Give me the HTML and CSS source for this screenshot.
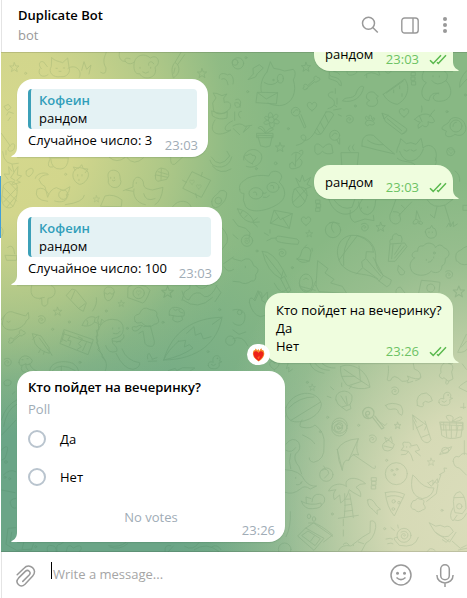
FILE: index.html
```html
<!DOCTYPE html>
<html lang="en">
<head>
<meta charset="utf-8">
<title>Duplicate Bot</title>
<link rel="stylesheet" href="styles.css">
</head>
<body>
<svg class="defs" width="0" height="0" aria-hidden="true">
  <defs>
    <symbol id="checks" viewBox="0 0 18 11"><path d="M1 6.2 L4.2 9.4 L12 1.2 M8 8.2 L9.3 9.4 L17 1.2" fill="none" stroke="#5ab94e" stroke-width="1.5"/></symbol>
    <symbol id="tail-in" viewBox="0 0 8 18"><path d="M6 0 V8 C6 13 4 15.500 0.300 17.300 Q0 18 1 18 H8 V0Z" fill="#fff"/></symbol>
    <symbol id="tail-out" viewBox="0 0 8 18"><path d="M2 0 V8 C2 13 4 15.500 7.700 17.300 Q8 18 7 18 H0 V0Z" fill="#effdde"/></symbol>
    <g id="star"><path d="M0-14 L4-4 L14-4 L6 3 L9 13 L0 7 L-9 13 L-6 3 L-14-4 L-4-4Z"/></g>
    <g id="heart"><path d="M0 13 C-10 6-15 1-14-6 C-12-14-3-14 0-6 C3-14 12-14 14-6 C15 1 10 6 0 13Z"/></g>
    <g id="spiral"><path d="M-1 1 C3 5 7-1 2-4 C-6-8-11 2-6 8 C3 16 15 5 11-5 C7-13-3-14-9-9"/></g>
    <g id="dot"><circle r="3"/></g>
    <g id="bone"><path d="M-14 15 C-22 22-28 11-20 9 C-26 1-14-3-10 5 L10-13 C5-23 17-27 20-19 C29-20 29-9 20-9 C17-3 12-6 11-7 L-10 10 Q-9 15-14 15Z"/></g>
    <g id="duck"><path d="M-20 12 C-22 2-14-2-5 2 C-8-5-6-18 5-18 C15-18 18-8 13-2 L21 0 L12 4 C16 18 6 22-6 21 C-14 21-19 18-20 12Z M-11 9 Q-4 16 2 8"/><circle cx="7" cy="-10" r="1"/></g>
    <g id="fish"><path d="M-24 12 C-18-10 4-20 16-10 L26-16 L22-2 L25 7 L13 2 C0 16-14 16-24 12Z M-10-3 Q-5 4-9 11 M14-8 L12 2"/></g>
    <g id="carrot"><path d="M-36-27 C-22-28 8-8 12 13 C-12 14-30-6-36-27Z M12 13 L29 12 M10 10 L23 0 M11 15 L23 26 M-23-20 L-27-13 M-7-9 L-14-2"/></g>
    <g id="flower"><circle r="9"/><path d="M-7-7 C-15-25 4-29 5-9 C15-27 30-10 10-2 C32-1 24 20 8 8 C13 28-8 28-5 9 C-23 21-30 3-10 1 C-27-4-20-18-7-7Z"/></g>
    <g id="candy"><circle r="13"/><path d="M-4 4 C2 7 6-1 0-4 C-8-5-9 8 0 10 M10 10 L31 37 L36 34 L15 7"/></g>
  </defs>
</svg>
<div class="app">
  <div class="edge"><span class="edge-mark"></span></div>
  <main class="window">
    <header class="header">
      <div class="peer">
        <div class="peer-name">Duplicate Bot</div>
        <div class="peer-status">bot</div>
      </div>
      <div class="tools">
        <svg width="18" height="18" viewBox="0 0 18 18"><g fill="none" stroke="#999" stroke-width="1.500"><circle cx="7.500" cy="7.200" r="6"/><path d="M11.800 11.500 L16.800 16.500"/></g></svg>
        <svg width="18" height="17" viewBox="0 0 18 17"><g fill="none" stroke="#999" stroke-width="1.400"><rect x=".8" y="1" width="16.400" height="15" rx="2.800"/><path d="M12 1 V16"/></g></svg>
        <svg width="6" height="18" viewBox="0 0 6 18"><g fill="#999"><circle cx="3" cy="3" r="2.050"/><circle cx="3" cy="9" r="2.050"/><circle cx="3" cy="15" r="2.050"/></g></svg>
      </div>
    </header>

    <section class="chat">
      <svg class="pattern" width="466" height="500" viewBox="1 52 466 500" aria-hidden="true">
        <g transform="scale(.33333)">
          <use href="#star" x="43" y="202"/><use href="#star" x="606" y="220"/><use href="#dot" x="77" y="220"/>
          <path d="M119 207 C111 225 129 236 144 224 M124 206 C112 194 120 180 131 186 L142 200 M155 173 L154 199 C143 217 159 234 182 230 C202 233 213 215 207 201 L203 174 L188 188 C174 183 167 184 155 173 M204 205 C227 190 248 213 238 232 M245 211 L252 185 L260 208 L273 195 L267 222 M168 205 h4 M190 204 h4 M177 214 l6 0"/>
          <path d="M302 217 Q319 228 318 204 C303 180 319 163 319 156 M358 156 Q353 184 377 185 M390 176 C359 166 380 205 403 186 C409 165 433 158 451 174 C472 160 486 189 465 202 C476 235 430 244 419 221 C404 225 399 205 403 186 M446 196 C443 184 456 181 461 191 M420 202 v3 M452 202 v3 M428 216 q9 8 18 0"/>
          <path d="M543 157 L525 187 L533 194 L554 164 M524 188 C513 201 515 217 520 234 C535 224 542 209 533 194 M525 204 L521 220"/>
          <path d="M658 235 C655 218 672 218 683 225 C694 216 704 237 699 252 M665 237 Q680 230 684 254 M640 280 L648 294 L638 309 L641 332 C650 348 677 343 690 325 C697 307 682 302 673 308 L671 294 L681 282 L666 287 L652 281Z M636 333 Q668 347 682 335 L681 354 Q657 362 638 348Z M645 360 C622 395 650 417 693 390 C670 399 668 376 697 363"/>
          <path d="M13 319 l12-6 8 10-11 8Z M20 345 l6-10 14 5 M31 352 l-7 10 M4 400 L31 438 M29 438 C17 447 27 461 41 449 C50 431 38 425 29 438"/>
        </g>
        <g transform="translate(233 0) scale(.33333)">
          <circle cx="15" cy="190" r="17"/><circle cx="6" cy="187" r="9"/><use href="#dot" x="39" y="173"/><use href="#dot" x="44" y="275"/>
          <path d="M46 238 L61 222 L60 205 L79 194 L91 204 L73 221 L68 230Z"/>
          <path d="M102 216 L112 185 L122 205 Q139 207 155 213 L181 208 Q192 218 181 240 C193 275 178 310 147 316 C126 319 109 311 105 309 M102 216 C86 233 81 258 85 275 M94 248 Q119 263 137 242 M74 277 L134 278 L130 312 L70 308Z M74 278 L100 297 L134 278"/><ellipse cx="142" cy="236" rx="9" ry="13"/><circle cx="121" cy="240" r="2"/>
          <use href="#star" x="219" y="201"/><use href="#bone" x="234" y="252"/><use href="#heart" x="237" y="319"/>
          <path d="M8 299 Q19 293 23 306 L21 322 M5 309 q14-5 17 9-14 11-17-6 M5 336 v25 M25 334 q-10 0-8 12l5 8 M0 378 Q22 365 36 379 L56 376 M1 386 L20 404 M41 380 L31 397 L50 380"/>
          <use href="#flower" x="115" y="360"/>
          <path d="M75 406 L118 407 L111 438 Q99 445 84 438Z M72 400 h48 v13 h-48Z M98 400 C93 377 80 376 75 384 C86 384 88 393 98 400 C105 383 121 381 121 388 L103 399"/>
          <circle cx="188" cy="335" r="13"/><path d="M181 338 Q189 324 195 331 M198 348 L214 384 L219 381 L204 344"/>
          <path d="M279 336 L245 396 Q253 409 266 400 L302 345 Q297 332 279 336Z M275 344 L286 368 M262 366 L273 387 M251 385 L262 402 M245 397 C221 437 200 418 205 407 C221 397 230 428 190 436 M285 326 C315 318 305 297 290 292 C282 284 287 275 300 276 M302 330 L324 326 M304 315 l7 5 M316 344 l9 4 M307 266 v14 M312 295 v17"/>
          <path d="M289 217 Q286 229 302 231 C322 235 326 247 325 257 L318 254 C316 243 304 242 289 236Z M329 302 C336 287 357 300 368 283 C374 264 385 254 392 261 C387 292 360 310 330 303Z"/>
          <path d="M401 295 C394 276 423 268 429 284 L436 289 L430 294 C440 307 430 321 415 319 C399 320 397 305 409 302Z"/>
          <path d="M451 283 L515 237 C532 258 526 296 493 313 C474 310 459 299 451 283Z M460 279 L511 243 M482 270 v8 M500 258 v8 M507 281 v8"/>
          <path d="M302 214 Q315 216 320 223 M342 216 C341 237 381 218 371 215 M395 226 Q413 210 438 226 M401 222 v11 M437 214 l3 10 M458 216 Q466 226 475 213"/>
          <path d="M536 217 h11 v10 h-12Z M535 231 h11 v10 h-11Z M536 245 h12 v10 h-11Z M572 214 Q559 240 580 248 C560 267 562 300 588 302 C591 280 606 277 617 281 M597 242 Q610 262 639 242 C650 222 637 215 633 213 M639 242 C661 265 661 304 617 304 C595 303 596 283 617 279 M600 227 v3 M619 228 v3 M701 212 Q678 235 680 262 Q691 247 702 237"/>
          <use href="#dot" x="367" y="318"/><use href="#spiral" x="349" y="358"/>
          <path d="M401 361 C391 349 403 343 406 355 M409 356 C403 341 419 342 416 356 M418 360 C420 347 430 354 421 363 M403 377 C390 373 400 357 411 361 C431 365 426 379 411 374Z"/>
          <path d="M448 340 L465 346 L521 386 Q523 399 506 402 L458 365Z M448 340 L453 357 L465 346 M463 356 L506 392 M509 402 L520 391"/>
          <use href="#heart" x="513" y="338"/><use href="#dot" x="642" y="335"/><use href="#dot" x="697" y="285"/><path d="M545 358 C564 338 591 335 603 360 C609 368 595 371 585 365 C589 380 577 384 569 376 L556 385Q551 374 562 367Q554 366 545 358Z M566 336 q3-9 0-18 M590 350 Q596 336 605 330 M559 347 l8 18"/>
          <path d="M627 386 C626 373 646 376 651 360 C661 345 692 355 696 374 C706 393 687 415 666 403 C648 417 630 408 640 395Z"/><circle cx="669" cy="378" r="18"/><path d="M660 379 q0-12 10-12"/>
          <circle cx="305" cy="406" r="15"/><path d="M297 408 q7-14 15-6 M311 419 L318 432 M320 416 v16"/><use href="#star" x="141" y="442"/><use href="#dot" x="166" y="386"/>
          <path d="M246 436 Q254 424 270 443 Q286 426 296 435 L300 459 Q281 466 268 454 Q253 472 246 456Z"/>
          <path d="M387 438 C385 414 397 400 421 406 L457 439 L485 462 Q431 450 387 438Z M404 421 Q425 437 450 434"/>
          <path d="M325 458 h52 l-8 73 h-39Z M351 454 q-10-10 0-17 M363 451 q-10-10 0-17 M199 454 q13-10 10 7 L190 484 M32 480 C27 454 64 435 84 461 C94 483 70 510 40 499"/>
          <path d="M491 457 C491 440 502 434 503 416 L520 431 Q533 424 549 433 L564 415 Q569 431 570 444 C592 423 620 449 607 482 M500 454 C514 497 557 490 571 447 M493 475 C510 491 541 478 552 503 C587 518 621 497 607 474 M513 450 q8 8 16 0 M534 450 q8 8 16 0"/>
          <circle cx="653" cy="455" r="12"/><use href="#heart" x="654" y="454" transform="translate(327 227) scale(.5)"/>
          <path d="M42 466c-12-4-14 13 17 26M42 466q14-9 15 0q14-1 10 10L57 491"/>
        </g>
        <g transform="translate(0 150) scale(.33333)">
          <path d="M79 63 Q93 50 99 58 Q103 69 87 80Q75 78 79 63Z M148 24 h56 M152 26 Q154 59 183 57 Q204 55 205 24 M149 29 Q137 56 158 51"/>
          <path d="M226 59 Q236 45 260 61 C276 76 254 104 238 103 C218 95 212 69 226 59Z M225 60 L220 51 L236 55 L245 44 L250 56 L264 57 L256 68 M233 74 v4 M246 74 v4 M237 88 v4"/>
          <circle cx="197" cy="73" r="3"/><path d="M325 85 C320 67 330 59 345 61 C364 67 357 79 363 95 C361 118 331 119 325 98Z M332 82 v3 M343 82 v3 M337 91 q4 4 8 0"/>
          <path d="M36 43 L42 68 L32 83 L45 91 L35 103 M35 63 L26 50 L28 73 L12 72 L24 88 M42 66 L54 50 L52 75 L65 78 L50 91 L61 97 L38 104 M11 105 Q34 84 51 105 C54 124 48 164 35 172 C15 180 1 159 6 137Z M10 112 L50 153 M28 98 L51 122 M7 137 L39 169 M52 112 L11 156 M50 136 L21 171"/>
          <path d="M106 85 C110 65 144 67 145 74 Q124 74 117 89 Q122 104 135 110 L143 142 Q150 118 169 113 L190 122 L210 110 Q208 127 199 134 C208 153 182 160 164 153 M146 132 Q131 107 111 118 Q100 150 143 154 M253 136 Q251 157 196 164"/>
          <circle cx="190" cy="134" r="14"/><use href="#star" x="289" y="147" transform="translate(87 44) scale(.7)"/>
          <path d="M370 122 L399 111 C397 75 422 75 430 96 C430 117 441 116 457 120 L489 112 Q485 153 465 164 M402 117 C397 138 410 159 436 164 M431 131 Q437 157 465 146 M378 120 L400 124 M409 98 v2"/>
          <path d="M466 77 Q467 58 483 54 Q500 56 505 65 Q510 78 500 88 L473 94Q464 90 466 77Z M469 75 L503 82 M474 65 L502 73 M484 56 L483 90"/>
          <path d="M549 114 L576 65 L632 91 L605 141Z M559 97 L548 91 M604 78 L607 67 M587 131 L590 143"/><use href="#heart" x="576" y="96" transform="translate(288 48) scale(.5)"/><use href="#heart" x="597" y="110" transform="translate(298 55) scale(.5)"/>
          <path d="M634 21 Q659 60 689 18 L681 4 M630 31 Q635 53 665 51 Q690 45 695 21 M637 48 Q661 77 693 57 M328 22 Q350 42 375 23 M381 23 Q402 50 430 24 M512 22 Q510 47 524 43 L548 21 M8 5 Q12 52 55 40 M18 14 L18 2 M302 168 L315 138 Q342 130 366 150 L364 169Z"/>
          <path d="M635 155 C638 136 652 137 659 123 Q674 118 680 129 Q681 153 656 170 Q636 181 635 155Z"/><circle cx="655" cy="152" r="10"/><path d="M518 170 Q531 152 551 154 Q568 156 573 170"/>
          <path d="M23 292 Q40 278 44 311 M16 316 L51 317 L49 331 H21Z M666 233 Q688 256 681 278 L666 299 M671 341 L700 321 M672 350 Q684 372 701 358 M2 230 Q15 240 6 258"/>
        </g>
        <g transform="translate(233 150) scale(.33333)">
          <path d="M20 119 C15 97 35 93 42 85 Q72 72 108 78 C111 56 147 61 146 82 Q143 92 138 96 C157 113 162 139 143 156 C111 182 55 193 38 170 Q27 152 33 130 Q21 132 20 119Z"/><ellipse cx="69" cy="130" rx="21" ry="17"/><ellipse cx="120" cy="112" rx="18" ry="15"/><path d="M91 129 q5 4 9-1 M91 142 q10 4 18-5 M62 127 q10-5 9 8 M113 107 q10-5 9 8"/>
          <circle cx="128" cy="40" r="4"/><circle cx="70" cy="56" r="3"/><path d="M171 42 C165 61 181 59 201 50 Q214 34 201 27 M187 49 L189 11 M176 14 Q188 0 202 12 M169 43 l9-7 7 10"/>
          <path d="M184 118 Q201 104 218 117 C230 138 212 170 194 172 C175 169 174 143 184 118Z M187 116 L216 154 M218 119 L180 157 M204 112 L224 137 M199 109 L188 84 L201 96 L208 75 L214 94 L233 82 L222 103 L235 110 L217 117"/>
          <use href="#carrot" x="50" y="204"/><path d="M124 181 L178 191 L169 235 L113 220Z M124 181 L142 209 L178 191 M113 220 L137 202 M149 204 L169 235"/><use href="#heart" x="219" y="213"/><use href="#star" x="229" y="251" transform="translate(57 63) scale(.75)"/>
          <path d="M249 150 h12v10h-12Z M251 162h12v10h-12Z M249 174h12v10h-12Z"/>
          <circle cx="300" cy="240" r="23"/><path d="M300 218 Q289 231 302 247 M290 218 L302 216 L319 221"/><use href="#spiral" x="394" y="232"/><use href="#star" x="443" y="231"/>
          <path d="M288 149 C300 190 343 209 372 175 L388 148 M304 151 Q327 183 357 172 L365 149 M352 181 Q347 208 365 217 L396 207 L423 212 L421 196 M377 156 Q379 193 404 194 Q427 187 428 151 M385 173 v3 M404 170 v3"/>
          <path d="M488 150 L475 186 C465 200 471 221 488 222 C504 220 506 204 498 196 L536 156 M481 185 Q502 184 501 196 M505 166 l9 8"/><path d="M541 215 Q548 202 556 212 Q554 224 542 222Z M558 220 Q558 205 569 219 Q567 227 558 220Z M548 208 L551 182 L561 207"/>
          <path d="M583 150 Q599 178 637 165 L661 147 M612 170 L604 204 L592 194 M635 166 L654 227 M641 231 l7-12 4 12 9-16 0 15 12-8"/>
          <path d="M577 246 Q578 233 591 235 L596 226 Q599 237 606 236 Q616 256 603 263 Q582 271 577 246Z M588 246 v2 M598 246 v2"/>
          <path d="M0 208 L15 228 L38 235 L51 249 L48 265 M0 254 L15 267"/><circle cx="42" cy="272" r="17"/><use href="#spiral" x="42" y="273" transform="translate(12 82) scale(.7)"/>
          <path d="M129 267 Q128 256 142 259 L192 267 Q202 272 195 283 Q154 281 135 275Z M130 264 L114 265 M94 249 l12 7 M111 249 v-10 M113 267 l-11 5"/><use href="#spiral" x="147" y="309"/>
          <path d="M192 327 C210 318 200 302 214 293 Q232 289 234 308 L229 333Q205 344 192 327Z M193 327 Q213 329 229 333 M214 292 l7-7 M237 295 l1 8"/>
          <path d="M326 345 C300 307 315 262 354 256 C399 254 426 280 428 316 C427 342 431 359 452 377 L475 390 Q472 408 461 410 L438 393 C410 362 363 386 326 345Z M318 330 Q347 290 374 256 M354 256 Q327 292 332 346 M372 256 Q424 275 421 306 M421 306 L400 305 L398 326 L386 335 L389 353 L370 372 M401 328 L443 378 M392 355 L435 387 M421 323 L450 376 M451 377 L438 393"/>
          <path d="M466 333 L471 282 L515 279 L522 290 L487 333Z M471 280 Q468 266 478 268 Q476 252 491 251 Q492 258 504 257 Q510 268 506 276 M480 284 L476 326 M514 288 L485 324 M504 284 L485 313"/>
          <path d="M544 324 C529 319 541 300 554 304 Q553 285 571 288 C584 270 608 284 607 293 Q621 277 633 293 C653 301 652 320 637 325 Q638 344 627 347 C627 371 602 371 595 363 C579 382 545 378 536 363 C527 344 532 334 544 324Z M580 328 v3 M602 321 v3 M586 337 q10 0 12-8"/>
          <path d="M88 304 Q119 302 151 361 L144 386 Q102 366 88 304Z M97 315 L145 376 M144 386 L154 379 L174 421 L165 427Z M151 361 L160 380 M0 326 Q14 331 25 333 Q53 314 62 347 Q85 357 68 374 Q71 395 55 393 Q36 407 21 396 L0 394 M37 349 v4"/>
          <ellipse cx="219" cy="399" rx="20" ry="27"/><path d="M212 389 q7-10 14 0 M249 407 L254 332 L285 356 L276 369 L303 388 L293 399 L328 409 L341 430 L258 425 L249 407Z"/>
          <path d="M494 360 L496 346 L515 364 Q515 378 502 374Z M670 333 Q662 306 684 300 Q690 293 702 289 M673 333 Q682 348 704 343 M557 429 L565 391 Q600 393 621 397 L618 425"/><circle cx="593" cy="414" r="12"/><use href="#spiral" x="647" y="374"/><use href="#star" x="678" y="425" transform="translate(-136 -85) scale(1.2)"/><use href="#dot" x="604" y="309"/><use href="#dot" x="72" y="303"/><use href="#dot" x="178" y="353"/>
          <path d="M64 448 L75 422 L86 445 L103 426 L104 450 M489 430 Q486 413 502 411 L516 429 M691 166 h14 v15h-14Z M641 60 q-6 18 4 30 M666 63 q16 10 14 31"/>
        </g>
        <g transform="translate(233 280) scale(.33333)">
          <path d="M49 67 Q49 42 66 63 L78 36 Q90 31 86 61 L97 68 M49 67 Q58 104 82 110 L97 106 M124 10 Q146 55 167 21 M199 12 Q203 36 235 33 L248 4 M205 20 L247 31 M0 90 C20 84 36 92 36 109 C36 138 15 143 0 128 M0 176 Q30 164 44 197 M0 150 l18 13 20-7"/>
          <circle cx="20" cy="97" r="7"/><use href="#star" x="238" y="322" transform="translate(71 97) scale(.7)"/><use href="#heart" x="124" y="256"/><use href="#dot" x="284" y="412"/><use href="#dot" x="223" y="307"/>
          <path d="M165 251 l-5 15 8-4-1 14 11-8 M231 250 q7 24 42 30 M247 251 q12 19 42 20 M268 251 q16 14 38 13"/>
          <path d="M323 260 C347 246 404 263 411 322 Q378 333 341 315 Q319 288 323 260Z M333 268 L410 320 M378 258 L382 300 M327 289 L366 289 M350 316 L386 304"/>
          <path d="M466 258 C470 292 453 306 473 301 Q481 277 507 304 Q537 305 523 288 Q551 301 562 294 Q567 275 544 267 L541 251"/><path d="M548 302 q13-3 17-10 M524 304 q-8 9 15 0"/>
          <path d="M634 249 Q620 257 624 278 Q612 289 628 296 L633 293 L646 304 L660 297 L656 276 Q667 253 647 250 M640 300 L638 310 Q645 318 648 302"/>
          <path d="M159 382 C180 331 251 325 265 371 C265 412 199 435 174 422 Q155 410 159 382Z M174 421 L263 366 M167 384 q32-34 76-33 M157 408 l-15 33"/>
          <path d="M309 360 C302 334 344 322 357 348 Q359 362 351 374 L354 386 L340 392 L327 382 Q312 375 309 360Z M327 381 L350 374 M324 348 L340 373 M339 349 L343 373 M294 353 l-11-4 M302 329 l-9-8 M326 320 v-11 M349 326 l6-8"/>
          <use href="#spiral" x="485" y="333"/><use href="#candy" transform="translate(406 399) scale(1.3)"/><path d="M458 376 Q475 364 503 376 Q514 394 506 406 L496 399 Q496 385 480 387 Q464 393 458 376Z M553 376 Q546 340 580 339 Q597 348 598 362 L587 367 Q576 360 570 369 Q576 388 553 376Z"/><use href="#duck" x="638" y="355"/>
          <circle cx="320" cy="437" r="23"/><circle cx="320" cy="437" r="9"/><path d="M541 449 L539 405 L581 436 L575 450 M539 405 L550 426"/><use href="#star" x="494" y="437" transform="translate(148 131) scale(.7)"/>
          <path d="M621 426 L690 427 V450 H626Z M632 427 V450 M650 427 V450 M670 427 V450 M651 425 Q629 405 649 406 Q667 408 657 425 Q687 402 687 416 Q684 424 657 425 M702 303 Q676 319 678 323 L702 335 M700 163 L674 217 Q697 219 704 205 M684 202 L700 184 M688 252 L700 268 M692 370 v16 M683 382 h15"/>
        </g>
        <g transform="translate(0 280) scale(.33333)">
          <path d="M7 132 C9 100 27 89 43 98 L77 108 L85 97 L87 115 L79 122 C70 151 13 163 7 132Z M14 106 L3 120 M21 125 q5 5 10-1 M95 17 C86 52 108 58 125 54 L126 74 Q135 84 143 71 L144 55 C174 52 168 18 154 17 M119 57 q8-6 14-5"/>
          <use href="#dot" x="158" y="148"/><use href="#dot" x="319" y="93"/><use href="#dot" x="208" y="126"/><use href="#dot" x="489" y="127"/><use href="#dot" x="240" y="247"/><use href="#dot" x="382" y="145"/><use href="#dot" x="659" y="89"/><use href="#dot" x="624" y="215"/>
          <use href="#star" x="173" y="95" transform="translate(17 9) scale(.9)"/><use href="#star" x="503" y="36" transform="translate(-126 -9) scale(1.25)"/><use href="#star" x="364" y="71" transform="translate(109 21) scale(.7)"/><use href="#spiral" x="124" y="119"/><use href="#spiral" x="22" y="247"/><use href="#fish" x="271" y="124"/><use href="#bone" x="49" y="173"/>
          <path d="M200 45 L216 27 L228 31 L259 69 L250 94 L237 87 L202 50Z M224 33 L214 57 M255 71 L238 84 M278 93 Q293 72 289 53 M313 42 Q309 25 323 21 Q341 20 343 35 Q336 64 323 62 Q313 58 313 42Z M314 38 l8 5 8-5 6 5 7-6"/>
          <path d="M385 21 L403 11 L438 19 L450 31 Q438 67 428 69 L384 53Z"/><circle cx="416" cy="39" r="17"/><use href="#heart" x="416" y="38" transform="translate(208 19) scale(.5)"/>
          <path d="M546 61 L553 36 L569 25 L571 10 M549 60 Q594 94 637 53 M546 33 Q551 58 567 60 Q577 35 600 39 L614 50 Q633 54 651 16 M587 16 Q606 37 627 13 M648 17 L663 38 L645 65"/>
          <path d="M98 161 L123 168 L147 203 L148 220 Q121 214 106 192Z M118 174 L146 213 M122 207 L116 218 M133 214 L130 223 M149 214 L156 226 M98 178 L111 165"/>
          <path d="M193 149 L280 179 L264 224 L181 191Z M189 161 L276 190 M193 156 L185 185 M211 168 l-8 13 10 2-4 13 M235 170 l13 7-13 14 9 9-12 8 M185 177 l14 7 M248 212 l11-24"/>
          <path d="M316 272 C329 234 301 242 290 177 C291 136 312 118 337 118 Q371 118 370 149 Q369 172 336 176 L338 190 Q355 204 350 214 Q325 223 317 197 M349 187 Q378 179 371 164 M366 207 Q380 243 419 248 Q421 263 399 268 Q371 268 348 220 M310 122 L305 117 L302 133 L295 133 L297 149 L289 151 L294 167 L288 169 L294 184 L289 187 L297 203 L293 209 L307 223 L306 231 L315 241 M338 144 v3 M357 143 v3 M340 160 q14 5 20-6 M337 183 q14 2 25 2"/>
          <path d="M406 125 Q396 105 418 102 Q429 75 450 89 Q476 90 470 107 Q485 131 463 133 Q445 150 424 127Q409 132 406 125Z M424 140 Q410 159 399 151 Q391 136 409 141 Q423 131 431 140 L451 137 L463 184 Q464 201 451 199 Q440 200 435 190 L429 153 L417 160"/>
          <path d="M508 105 C504 82 522 79 537 84 Q558 88 552 108 Q535 112 508 105Z M520 108 L518 119 Q532 133 548 119 L545 109 M520 87 q5 9 12 2 M537 88 q-3 9 12 11"/>
          <path d="M491 240 C516 152 584 113 666 112 C653 185 596 239 491 240Z M535 184 Q503 212 491 240 Q545 229 579 204 L568 194 L553 201 L557 181 L535 184Z M560 160 L582 140 L586 166 L603 159 L610 177 L633 170 M637 133 L666 112"/>
          <path d="M57 247 C58 223 87 221 97 242 Q92 259 76 252 Q57 263 57 247Z M66 257 Q57 279 83 277 M77 252 Q77 277 104 278 M88 251 Q96 274 126 277 M66 239 h3 M81 236 h3 M149 273 C150 245 190 239 219 250 Q234 260 236 273 M157 272 Q180 244 226 272 M184 259 L184 274"/>
          <path d="M443 237 Q440 221 448 220 L457 237 M456 238 L471 233 M445 244 L470 243 M505 272 L526 265 L530 272 L548 263 L585 264 L570 273"/><use href="#duck" x="645" y="245"/><circle cx="691" cy="182" r="14"/><path d="M12 306 Q21 293 34 305 Q32 322 15 316Z M4 420 Q19 373 50 360 M11 439 Q19 389 50 373 M37 342 l8-7"/>
        </g>
        <g transform="translate(0 420) scale(.33333)">
          <path d="M5 45 Q30 20 47 1 M4 90 Q35 60 15 115 L5 120 M10 165 Q30 145 47 155 M5 210 L45 218 M47 235 Q28 238 31 250 Q36 268 47 264 M47 323 L24 325 L18 373 L50 391 L96 387 M35 337 L30 369 M71 368 L66 388 L94 390 L100 372"/><circle cx="15" cy="172" r="3"/><circle cx="29" cy="176" r="3"/><circle cx="18" cy="126" r="4"/><use href="#dot" x="107" y="380"/>
          <path d="M142 394 Q138 371 157 377 Q169 378 169 395 M171 394 Q166 372 181 373 L190 367 M199 394 Q203 365 220 384 Q245 369 244 387 L239 394 M326 377 Q359 384 378 367 M330 381 Q359 392 383 371 M495 394 Q493 372 512 377 M505 395 L520 378 M554 379 Q578 395 597 368 M583 389 Q619 364 656 394 M636 380 Q652 371 663 389"/>
        </g>
        <g transform="translate(233 420) scale(.33333)">
          <path d="M207 0 Q193 22 209 22 Q234 27 246 15 Q278 37 273 78 Q276 120 242 127 Q227 123 229 114 M209 45 Q238 58 245 71 M159 72 Q179 47 197 67 Q207 89 188 101 Q180 119 198 140 L206 162 M159 91 Q176 101 188 83 M173 101 Q165 125 173 146 M157 149 Q202 151 215 181 Q230 201 251 198 L232 207 Q214 194 202 207 Q179 226 157 217 M188 172 v3 M204 187 v3 M190 194 q12 3 17-9"/>
          <circle cx="319" cy="25" r="23"/><circle cx="316" cy="24" r="12"/><circle cx="317" cy="24" r="4"/><use href="#dot" x="377" y="16"/><use href="#dot" x="262" y="35"/><use href="#star" x="494" y="16" transform="translate(148 5) scale(.7)"/><use href="#spiral" x="418" y="57"/><use href="#star" x="594" y="126" transform="translate(119 25) scale(.8)"/>
          <path d="M313 89 Q328 59 376 56 Q366 84 377 105 Q358 97 347 121 Q330 116 328 151 Q315 124 313 89Z M376 56 L347 121 M313 89 L328 151 M360 103 L418 143 Q430 150 427 138 M432 0 L456 17 L461 11"/>
          <path d="M542 2 L567 60 Q584 77 594 59 L576 3 M550 24 L569 14 M565 52 L588 43 M624 8 L689 10 L684 51 Q646 62 627 47Z M623 14 L689 17 M638 16 L641 50 M655 16 V53 M675 17 L669 51"/>
          <path d="M453 69 Q467 54 474 67 L484 73 Q477 99 454 91Q443 77 453 69Z M461 66 L455 52 L468 59 L474 50 L478 66 M453 78 L479 84 M505 90 L512 80 Q504 63 520 67 Q534 65 534 78 L552 74 L560 90 L546 94 L562 107 M505 90 L526 94 L519 103 L505 104 M526 94 Q535 101 540 122 M521 80 v2 M531 80 v2"/>
          <ellipse cx="637" cy="91" rx="11" ry="9"/><path d="M621 103 Q618 93 656 80 Q652 99 621 103Z"/><circle cx="490" cy="161" r="33"/><circle cx="477" cy="151" r="3"/><circle cx="492" cy="148" r="3"/><circle cx="484" cy="164" r="3"/>
          <circle cx="280" cy="164" r="20"/><path d="M266 151 Q286 141 287 161 L275 174 M277 146 L272 138 M416 173 h14v10h-14Z M417 184h12v11h-12Z M416 197h12v10h-12Z"/>
          <path d="M287 212 C297 189 327 188 341 200 C330 174 367 164 398 191 L381 193 L369 202 Q386 213 383 230 L360 217 L349 209 Q342 236 323 249 L320 225 L304 239 Q297 221 308 210Z M335 221 Q338 260 334 292 M350 221 Q358 260 361 293 M334 238 L352 237 M335 256 L356 253 M334 274 L359 271 M316 295 L376 286"/>
          <path d="M539 166 C529 208 541 230 568 236 Q598 231 603 204 Q572 206 550 175Z M584 188 l11 11 11-14 9 8-5 28-29 23 M535 251 Q539 238 548 241 Q551 232 562 238 Q578 238 571 252 Q584 268 568 270 Q555 281 546 269 Q529 267 535 251 M587 188 l13-8 0 13 13-17 2 13 9-25-5 0 16-9-2-11 8 1"/>
          <path d="M457 218 Q488 210 515 223 L484 288Q461 261 457 218Z M463 230 Q487 222 510 234"/><circle cx="482" cy="244" r="5"/><circle cx="498" cy="248" r="4"/><circle cx="481" cy="267" r="4"/>
          <path d="M404 240 Q416 230 431 258 L443 268 L432 271 L433 283 L420 269 Q402 258 404 240Z M205 244 Q231 259 264 249 Q271 265 238 266 Q214 269 205 244Z M237 245 Q239 220 260 223 Q279 226 274 246 L263 259 M220 249 L219 231 L234 236"/>
          <path d="M196 346 L218 324 L273 355 L243 391 L196 350Z M217 325 L241 309 Q262 313 299 345 L272 366 M246 312 L299 349 M207 346 l18-13 37 23-15 20Z M244 348 l-11 15 M227 309 L246 309"/><ellipse cx="228" cy="289" rx="5" ry="7"/><ellipse cx="243" cy="297" rx="5" ry="7"/><use href="#dot" x="298" y="282"/>
          <path d="M317 391 Q325 372 354 378 L389 351 L411 338 L412 303 Q430 299 428 323 Q423 357 399 369 L386 393 M331 373 q10-11 18 4 M361 374 v3 M376 366 L392 371 M331 297 V317 M331 330 V348"/>
          <circle cx="513" cy="346" r="21"/><use href="#spiral" x="513" y="346"/><path d="M494 352 Q478 351 486 361 L499 376 Q546 386 556 352 M459 357 q15-5 20 0 M464 371 q12-4 16 0 M484 331 l-10-8 M496 324 l-2-9"/>
          <path d="M589 309 L605 335 Q622 354 646 349 L661 335 Q650 312 635 321 Q622 312 609 318Z M608 337 L650 366 L669 337 M628 359 L640 367 L648 358 M658 364 L682 385 L700 376 M676 390 L701 385"/>
          <path d="M663 265 Q655 217 681 215 Q699 227 699 266 L688 281 L667 278Z M660 264 Q645 290 660 303 L672 286 M700 281 Q687 309 665 300 M663 233 L692 232 M660 124 Q663 104 678 111 Q690 93 703 103 M661 124 Q663 143 679 144 L700 165 M694 104 V62"/><circle cx="679" cy="259" r="8"/><circle cx="155" cy="388" r="19"/><path d="M159 350 Q174 323 172 275 M584 393 Q591 379 606 391"/><use href="#dot" x="455" y="326"/><use href="#dot" x="627" y="271"/><use href="#dot" x="461" y="121"/>
        </g>
      </svg>

      <div class="messages">
        <article class="bubble out">
          <p>рандом</p>
          <span class="meta">23:03 <svg width="18" height="11"><use href="#checks"/></svg></span>
          <svg class="tail"><use href="#tail-out"/></svg>
        </article>
        <article class="bubble in reply-a">
          <div class="quote"><b>Кофеин</b><span>рандом</span></div>
          <p>Случайное число: 3</p>
          <span class="meta">23:03</span>
          <svg class="tail"><use href="#tail-in"/></svg>
        </article>
        <article class="bubble out">
          <p>рандом</p>
          <span class="meta">23:03 <svg width="18" height="11"><use href="#checks"/></svg></span>
          <svg class="tail"><use href="#tail-out"/></svg>
        </article>
        <article class="bubble in reply-b">
          <div class="quote"><b>Кофеин</b><span>рандом</span></div>
          <p>Случайное число: 100</p>
          <span class="meta">23:03</span>
          <svg class="tail"><use href="#tail-in"/></svg>
        </article>
        <article class="bubble out question">
          <p>Кто пойдет на вечеринку?<br>Да<br>Нет</p>
          <span class="meta">23:26 <svg width="18" height="11"><use href="#checks"/></svg></span>
          <svg class="tail"><use href="#tail-out"/></svg>
          <span class="reaction"><svg width="13" height="14" viewBox="0 0 13 14"><path d="M1 5 Q1 2 3 2 L3.500 .5 Q5 1.500 5 2.500 L6.500 1 L7.500 3 Q8 1 9.500 .3 L10 2 Q12 1.500 12.200 5 Q13 9 6.600 13.500 Q0 9 1 5Z" fill="#f58a2d"/><path d="M1.500 5.500 C1.500 2.500 5.500 2.500 6.500 5 C8 2.300 11.700 3 11.500 6 C11.200 9 8.500 11 6.600 13 C4 11 1.500 9 1.500 5.500Z" fill="#ed2119"/><path d="M5 9 Q6.500 10 7 7.500 Q8.500 9 6.600 11.500Z" fill="#ff5a20"/></svg></span>
        </article>
        <article class="bubble in poll">
          <h2>Кто пойдет на вечеринку?</h2>
          <div class="kind">Poll</div>
          <div class="option"><i></i>Да</div>
          <div class="option"><i></i>Нет</div>
          <div class="votes">No votes</div>
          <span class="meta">23:26</span>
          <svg class="tail"><use href="#tail-in"/></svg>
        </article>
      </div>
    </section>

    <footer class="composer">
      <svg class="clip" width="20" height="22" viewBox="0 0 20 22"><path d="M1.200 9.800 L8 3.200 C13.500 -2.600 22.300 4.800 16.700 11 L9 19.200 C4.200 23.800 -1.800 17.600 2.700 12.900 L9.300 6.400 C12 3.900 15.700 7.200 13.200 10.100 L6.800 16.400" fill="none" stroke="#999" stroke-width="1.500" stroke-linecap="round"/></svg>
      <div class="field"><span class="caret"></span>Write a message...</div>
      <svg class="smile" width="22" height="22" viewBox="0 0 22 22"><g fill="none" stroke="#999" stroke-width="1.500"><circle cx="11" cy="11" r="10"/><path d="M6.500 13.500 Q11 17.800 15.500 13.500"/></g><circle cx="7.500" cy="9.300" r="1.500" fill="#999"/><circle cx="14.500" cy="9.300" r="1.500" fill="#999"/></svg>
      <svg class="mic" width="18" height="23" viewBox="0 0 18 23"><g fill="none" stroke="#999" stroke-width="1.500"><rect x="4.700" y=".8" width="8.600" height="15" rx="4.300"/><path d="M.9 11 C.9 21.500 17.100 21.500 17.100 11 M9 19 V23"/></g></svg>
    </footer>
  </main>
</div>
</body>
</html>
```
FILE: styles.css
```css
* { box-sizing: border-box; }
body {
  margin: 0;
  background: #fff;
  color: #000;
  font: 13px/18px "Open Sans", "Noto Sans", sans-serif;
}
p, h2 { margin: 0; }
svg { display: block; }
.defs { position: absolute; }
.app { display: flex; width: 467px; height: 598px; overflow: hidden; }
.edge { width: 1px; background: #fff; padding-top: 176px; }
.edge-mark { display: block; height: 62px; background: #419fd9; }
.window { display: flex; flex: 1; flex-direction: column; min-width: 0; }

.header {
  display: flex;
  justify-content: space-between;
  height: 52px;
  padding: 6px 19px 0 16px;
  border-left: 1px solid #e4e4e4;
  background: #fff;
}
.peer-name { font-weight: 600; line-height: 19px; }
.peer-status { color: #999; line-height: 20px; }
.tools { display: flex; align-items: center; height: 38px; gap: 22px; }
.tools svg:last-child { margin-left: 1px; }

.chat {
  position: relative;
  height: 500px;
  overflow: hidden;
  background:
    radial-gradient(ellipse 270px 330px at 476px 460px, #dbddbb 0%, #d6dab6 30%, rgba(205, 213, 176, .72) 52%, rgba(190, 205, 168, .3) 76%, rgba(180, 200, 160, 0) 100%),
    radial-gradient(ellipse 270px 300px at 0 80px, #d5d88d 0%, #d2d68c 28%, rgba(200, 210, 138, .62) 60%, rgba(175, 200, 134, .2) 84%, rgba(160, 195, 132, 0) 100%),
    radial-gradient(ellipse 390px 310px at 60px 470px, #6ba587 0%, #6ba587 30%, rgba(107, 165, 135, .5) 60%, rgba(107, 165, 135, 0) 100%),
    #88b884;
  box-shadow: inset 0 1px rgba(0, 0, 0, .12), inset 0 -1px rgba(0, 0, 0, .12);
}
.pattern {
  position: absolute;
  inset: 0;
  fill: none;
  stroke: #31683f;
  stroke-width: 2.6;
  stroke-linejoin: round;
  stroke-linecap: round;
  opacity: .145;
}
.messages {
  position: relative;
  display: flex;
  flex-direction: column;
  justify-content: flex-end;
  gap: 8px;
  height: 100%;
  padding: 0 14px 10px 16px;
}
.bubble {
  position: relative;
  flex: none;
  padding: 8px 11px;
  border-radius: 16px;
  box-shadow: 0 1px 1px rgba(40, 90, 50, .16);
}
.in { align-self: flex-start; background: #fff; border-bottom-left-radius: 0; }
.out { align-self: flex-end; width: 139px; height: 34px; background: #effdde; border-bottom-right-radius: 0; }
.question { width: 188px; height: 70px; }
.reply-a, .reply-b { height: 78px; padding-top: 10px; }
.reply-a { width: 191px; }
.reply-b { width: 205px; }
.tail { position: absolute; bottom: 0; width: 8px; height: 18px; }
.in .tail { left: -6px; }
.out .tail { right: -6px; }
.meta {
  position: absolute;
  right: 10px;
  bottom: 3px;
  display: flex;
  align-items: center;
  gap: 10px;
  color: #a0acb6;
}
.out .meta { right: 6px; color: #6cc264; }
.quote {
  display: flex;
  flex-direction: column;
  height: 40px;
  margin-bottom: 2px;
  padding: 2px 8px;
  border-left: 3px solid #3ca0b8;
  border-radius: 4px;
  background: #e4f2f4;
}
.quote b { color: #309eba; font-weight: 600; }
.reaction {
  position: absolute;
  left: -18px;
  bottom: -2px;
  display: grid;
  place-items: center;
  width: 23px;
  height: 21px;
  border-radius: 11px;
  background: #fff;
}
.poll { width: 268px; height: 171px; padding-top: 7px; }
.poll h2 { font-size: 13px; font-weight: 600; line-height: 18px; }
.kind { margin-top: 4px; color: #a0acb6; }
.option { display: flex; align-items: center; gap: 14px; height: 38px; }
.kind + .option { margin-top: 2px; }
.option i { width: 18px; height: 18px; border: 2px solid #b9c4ce; border-radius: 50%; }
.votes { margin-top: 12px; color: #a0acb6; text-align: center; }

.composer {
  display: flex;
  align-items: center;
  height: 46px;
  padding: 0 13px 0 14px;
  border-left: 1px solid #e4e4e4;
  background: #fff;
}
.clip { margin-top: 1px; }
.field { display: flex; flex: 1; align-items: center; margin: -2px 0 0 15px; color: #a5a5a5; }
.caret { width: 1px; height: 17px; margin: -7px 1px 0 0; background: #000; }
.smile { margin-right: 24px; }
.mic { margin-top: 1px; }
```
